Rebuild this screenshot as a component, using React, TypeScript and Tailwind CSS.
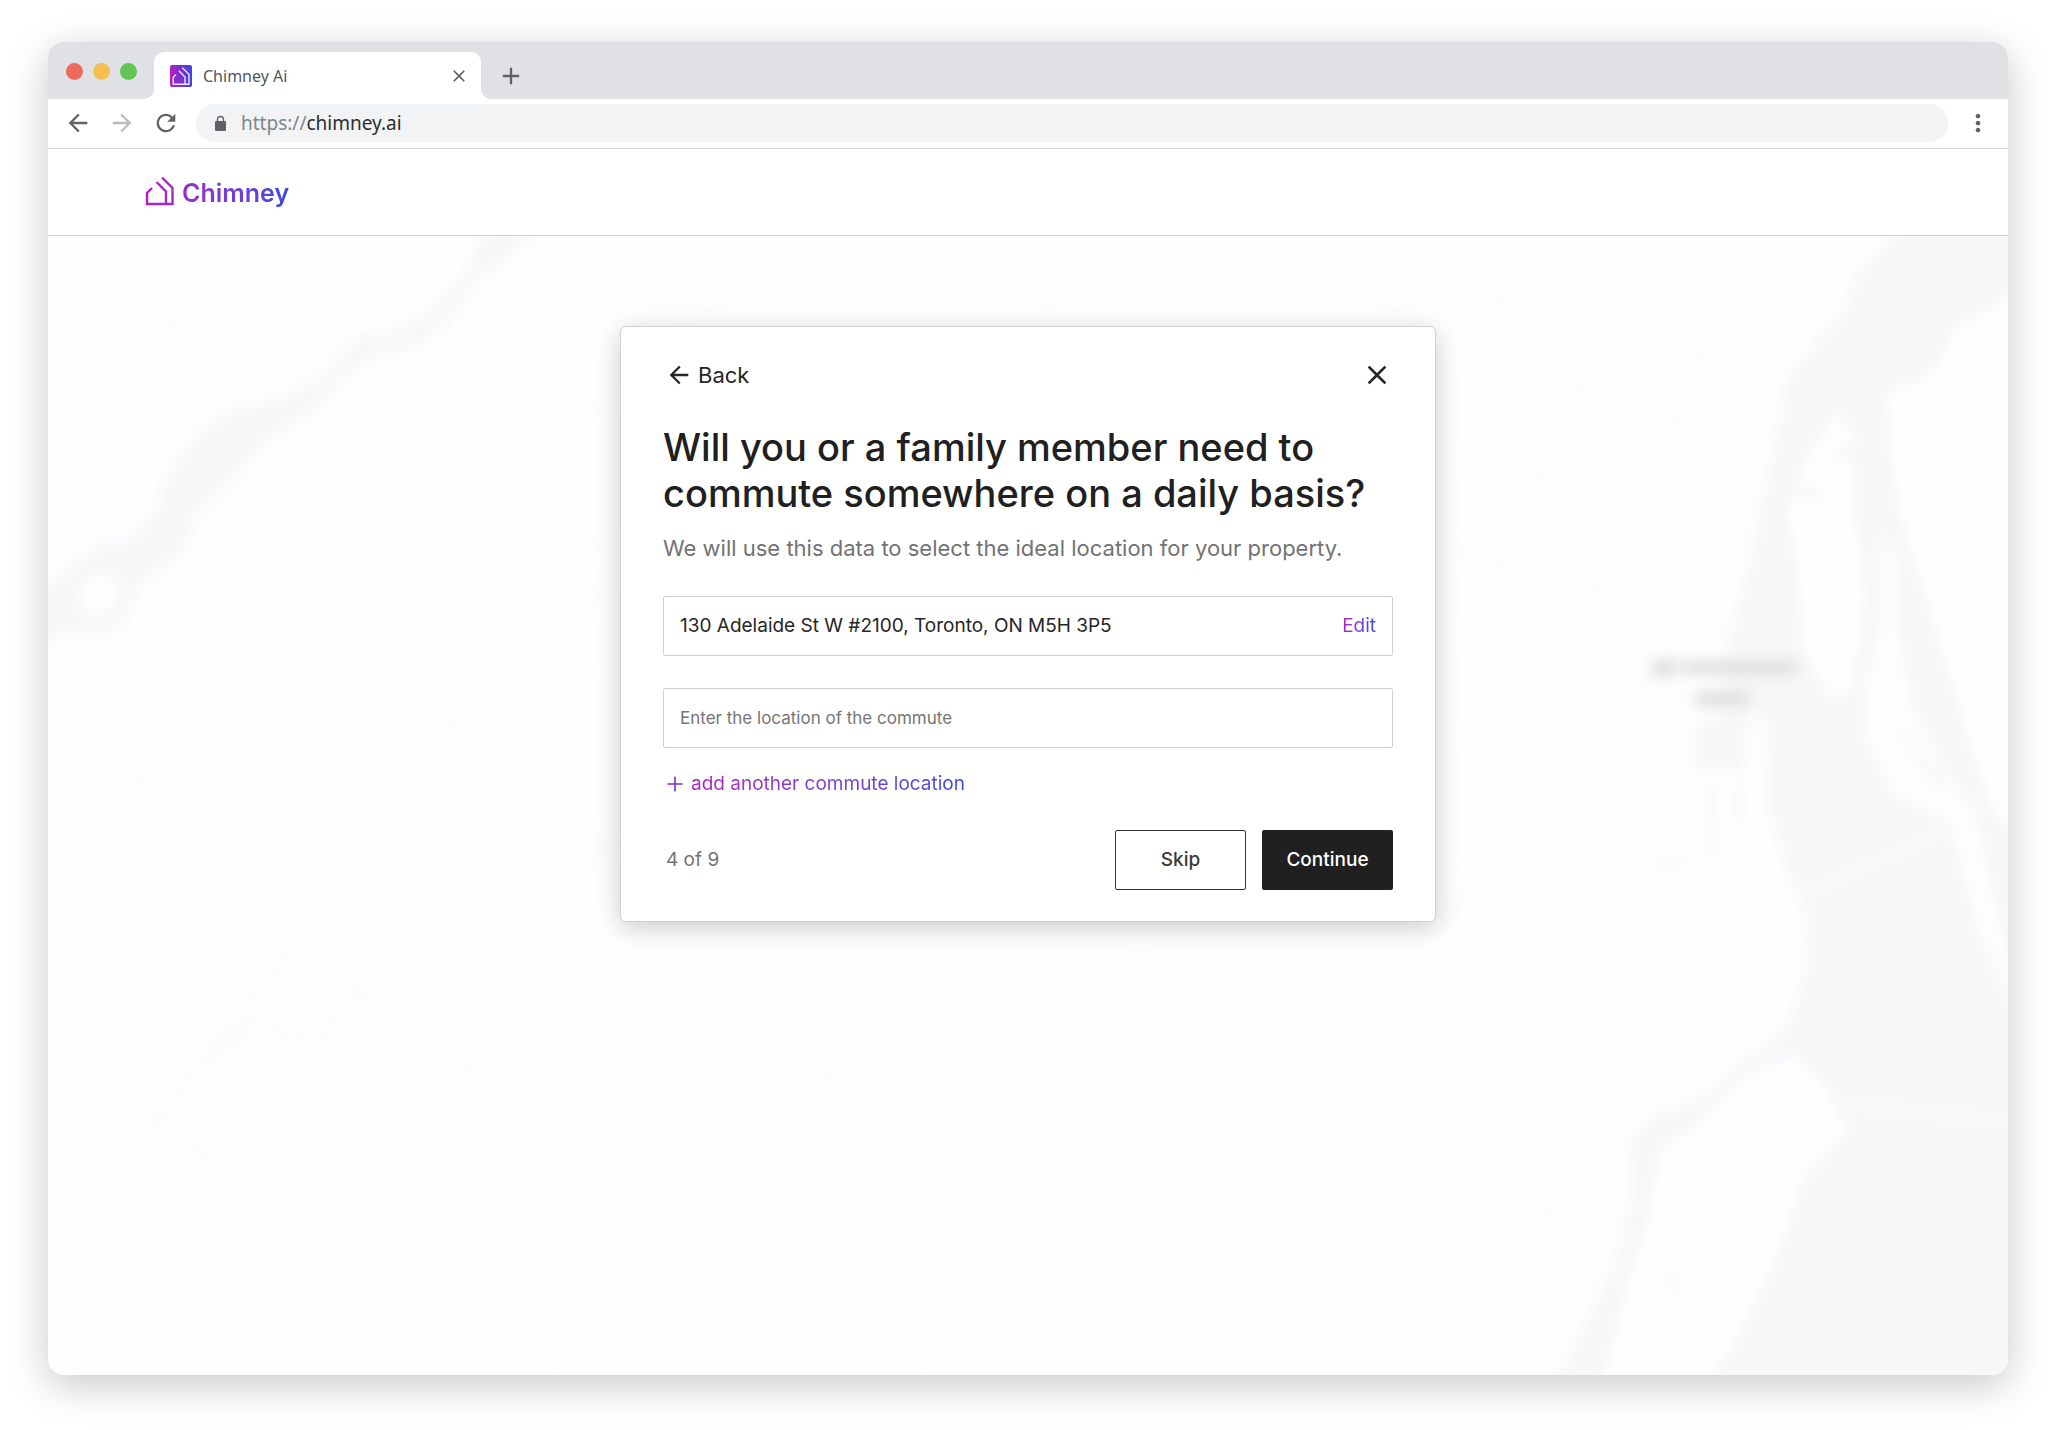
import type { ReactNode } from "react";
import {
  MdAdd,
  MdArrowBack,
  MdArrowForward,
  MdClose,
  MdMoreVert,
  MdRefresh,
} from "react-icons/md";

const HOUSE = "M7 12 L2 17 V28 H27.5 V12 L17 1.5 M11.5 6 L21 15.5 V28";

function HouseMark() {
  return (
    <svg viewBox="0 0 30 30" className="size-[30px]" fill="none" aria-hidden="true">
      <defs>
        <linearGradient id="mark" x1="0" y1="0" x2="30" y2="0" gradientUnits="userSpaceOnUse">
          <stop offset="0" stopColor="#b31ec4" />
          <stop offset="1" stopColor="#9a2ecb" />
        </linearGradient>
      </defs>
      <path d={HOUSE} stroke="url(#mark)" strokeWidth="2.4" />
    </svg>
  );
}

function Favicon() {
  return (
    <svg viewBox="0 0 22 22" className="size-[22px]" fill="none" aria-hidden="true">
      <defs>
        <linearGradient id="fav" x1="0" y1="0" x2="22" y2="0" gradientUnits="userSpaceOnUse">
          <stop offset="0" stopColor="#b31ec4" />
          <stop offset="1" stopColor="#3a46e2" />
        </linearGradient>
      </defs>
      <rect width="22" height="22" rx="2" fill="url(#fav)" />
      <path
        d="M6 9.5 L3.2 12.2 V19.3 H19 V9.3 L12.4 2.7 M8.8 5.8 L15 12 V19.3"
        stroke="#f3e6fb"
        strokeWidth="1.4"
      />
    </svg>
  );
}

function LockIcon() {
  return (
    <svg viewBox="0 0 17 17" className="size-[17px]" fill="none" aria-hidden="true">
      <rect x="3" y="6" width="11" height="10" rx="1.2" fill="#5f6368" />
      <path d="M5.5 6.5 V4.5 a3 3 0 0 1 6 0 V6.5" stroke="#5f6368" strokeWidth="1.4" />
    </svg>
  );
}

function TabCorner({ side }: { side: "left" | "right" }) {
  return (
    <svg
      viewBox="0 0 10 10"
      aria-hidden="true"
      className={
        side === "left"
          ? "absolute bottom-0 -left-[10px] size-[10px]"
          : "absolute bottom-0 -right-[10px] size-[10px] -scale-x-100"
      }
    >
      <path d="M10 0 V10 H0 A10 10 0 0 0 10 0 Z" fill="#fff" />
    </svg>
  );
}

const ROADS = [
  "M36 526 L106 596 L169 654 L217 701 L271 750 L332 788 L377 835 L431 881",
  "M160 549 L262 631 Q285 650 302 642 L371 572 L440 510",
  "M36 674 L121 666 L211 671 L302 683 L377 671 L480 650",
  "M36 690 L106 596 L211 488 L270 480",
  "M187 391 L281 467 L335 543 L395 596 L416 636 L470 640",
  "M72 199 L121 240 L180 290 M151 193 L226 286 L300 330",
  "M169 951 Q180 975 193 975 L302 881 L350 823 L446 718",
  "M169 951 L235 881 M36 843 L106 771 M36 759 Q50 780 60 773 L118 730",
  "M422 1048 L419 934 Q440 935 446 928 L464 846 L500 800",
  "M36 1016 L211 1021 L473 1021",
  "M36 270 L150 240 L260 190 M36 340 L120 290",
  "M187 425 L260 400 L360 370 L470 300 M281 467 L380 440 L470 410",
  "M262 631 L380 520 L480 430 M302 683 L420 600",
  "M585 880 Q600 830 640 808 L745 862 L690 965 Q630 940 585 900",
  "M750 790 L870 730 L960 760 L900 860 L790 960 L700 1048",
  "M560 750 L640 808 L560 940 L480 1020",
  "M830 1020 L940 930 L1068 868 L1157 788 L1243 700 L1290 660",
  "M860 1040 L980 940 L1100 880 L1190 800 L1280 740",
  "M1119 485 L1227 502 L1300 540 M1119 560 L1250 600",
  "M1100 700 L1200 590 L1290 480 L1340 380",
  "M1119 270 L1220 300 L1350 340 M1100 215 L1200 245 L1370 290",
  "M1119 350 L1240 380 L1330 400 M1110 420 L1220 450 L1310 480",
  "M1150 190 L1130 300 M1250 200 L1190 330 L1140 440 M1330 200 L1260 360 L1200 480",
  "M1068 760 L1130 830 L1120 960 L1060 1048 M1130 830 L1240 870",
  "M1140 920 L1240 930 M1130 980 L1220 975 M1180 830 L1180 960",
  "M420 190 L520 240 L640 200 L800 230 L960 190 L1080 240",
];

function MapBackdrop() {
  return (
    <svg
      viewBox="37 180 1494 868"
      preserveAspectRatio="xMidYMid slice"
      className="absolute inset-0 size-full"
      aria-hidden="true"
    >
      <defs>
        <filter id="soft" x="-5%" y="-5%" width="110%" height="110%" colorInterpolationFilters="sRGB">
          <feGaussianBlur stdDeviation="5" />
        </filter>
        <filter id="softer" x="-20%" y="-60%" width="140%" height="220%" colorInterpolationFilters="sRGB">
          <feGaussianBlur stdDeviation="5" />
        </filter>
      </defs>
      <rect x="0" y="140" width="1600" height="960" fill="#fefefe" />
      <g filter="url(#soft)" strokeLinejoin="round" strokeLinecap="round">
        <g fill="none" stroke="#fbfbfb" strokeWidth="7">
          {ROADS.map((d) => (
            <path key={d} d={d} />
          ))}
        </g>
        <path
          fill="none"
          stroke="#f8fafd"
          strokeWidth="7"
          d="M115 857 L154 811 L223 724 M118 855 L157 884 M154 811 L196 782 L241 794 L277 753"
        />
        <path
          fill="#f5f7f9"
          d="M378 150 L356 205 L332 234 L302 252 L271 258 L241 290 L211 304 L181 310 L151 329 L124 366 L121 385 L100 410 L81 413 L60 426 L20 462 L20 497 L60 480 L81 484 L97 475 L106 449 L142 420 L151 393 L181 365 L205 335 L235 319 L256 294 L287 272 L320 265 L347 242 L362 218 L407 181 L440 150 Z"
        />
        <path fill="#fefefe" d="M58 455 L75 436 L91 444 L88 464 L69 470 Z" />
        <path
          fill="#f5f7f9"
          d="M1450 140 L1440 180 L1415 210 L1403 240 L1364 283 L1352 339 L1339 403 L1326 455 L1316 492 L1312 545 L1290 554 L1290 586 L1330 590 L1336 540 L1345 549 L1348 619 L1364 671 L1377 700 L1374 747 L1361 785 L1339 800 L1317 819 L1297 837 L1259 850 L1243 870 L1243 916 L1230 963 L1208 1010 L1180 1060 L1600 1090 L1600 140 Z"
        />
        <g fill="#fefefe">
          <path d="M1368 806 L1387 823 L1409 861 L1374 899 L1355 957 L1323 1022 L1296 1062 L1220 1062 L1243 975 L1259 922 L1266 876 L1297 857 L1339 815 Z" />
          <path d="M1403 315 L1412 333 L1412 380 L1422 455 L1412 525 L1400 534 L1384 514 L1374 490 L1371 432 L1363 391 L1380 345 Z" />
          <path d="M1600 205 L1531 228 L1492 251 L1473 286 L1438 301 L1447 385 L1476 479 L1508 584 L1521 619 L1600 700 Z" />
          <path
            fillOpacity="0.85"
            d="M1435 403 L1447 426 L1447 479 L1457 537 L1483 590 L1505 619 L1545 790 L1510 715 L1486 625 L1444 607 L1422 560 L1422 525 L1435 467 Z"
          />
        </g>
        <g fill="none" stroke="#f4f6f9" strokeWidth="9">
          <path d="M1374 375 L1388 377 M1400 345 L1408 348 M1272 972 L1278 980" />
          <path d="M1304 600 L1304 650 M1326 600 L1326 625" strokeOpacity="0.6" />
          <path d="M1452 560 L1478 600" strokeOpacity="0.6" />
          <path d="M1265 660 L1280 656" strokeOpacity="0.6" />
        </g>
        <g fill="none" stroke="#fafbfc" strokeWidth="4">
          <path d="M1371 683 L1489 631" />
          <path d="M1412 842 L1560 858" strokeWidth="6" />
        </g>
      </g>
      <g filter="url(#softer)" fill="#dededf">
        <rect x="1260" y="503" width="18" height="12" />
        <rect x="1282" y="504" width="88" height="10" />
        <rect x="1293" y="527" width="40" height="11" />
      </g>
    </svg>
  );
}

function ToolButton({ label, children }: { label: string; children: ReactNode }) {
  return (
    <button type="button" aria-label={label} className="size-7 shrink-0 text-[28px]">
      {children}
    </button>
  );
}

function BrowserChrome() {
  return (
    <header className="font-['Noto_Sans',sans-serif]">
      <div className="flex h-[57px] items-end bg-[#dfe1e5] pl-[18px]">
        <div className="flex items-center gap-[10px] self-center pt-[2px]">
          <span className="size-[17px] rounded-full bg-[#ec6a5e]" />
          <span className="size-[17px] rounded-full bg-[#f4bf4f]" />
          <span className="size-[17px] rounded-full bg-[#61c554]" />
        </div>
        <div className="relative ml-[17px] flex h-[47px] w-[327px] items-center gap-[11px] rounded-t-[10px] bg-white pr-3 pl-4">
          <TabCorner side="left" />
          <Favicon />
          <span className="flex-1 text-base text-[#54575b]">Chimney Ai</span>
          <button type="button" aria-label="Close tab" className="text-xl text-[#5f6368]">
            <MdClose />
          </button>
          <TabCorner side="right" />
        </div>
        <button
          type="button"
          aria-label="New tab"
          className="ml-4 flex h-[47px] items-center text-[28px] text-[#5f6368]"
        >
          <MdAdd />
        </button>
      </div>
      <div className="flex h-[50px] items-center gap-4 border-b border-[#d5d7da] bg-white px-4 pb-px text-[#5f6368]">
        <ToolButton label="Go back">
          <MdArrowBack />
        </ToolButton>
        <span className="flex text-[#babcbe]">
          <ToolButton label="Go forward">
            <MdArrowForward />
          </ToolButton>
        </span>
        <ToolButton label="Reload">
          <MdRefresh />
        </ToolButton>
        <div className="flex h-[38px] flex-1 items-center gap-3 rounded-full bg-[#f1f3f4] px-4">
          <LockIcon />
          <p className="text-[19px] leading-7 text-[#2c2e31]">
            <span className="text-[#80868b]">https://</span>chimney.ai
          </p>
        </div>
        <ToolButton label="Menu">
          <MdMoreVert />
        </ToolButton>
      </div>
    </header>
  );
}

function CommuteCard() {
  return (
    <form
      className="relative w-full max-w-[816px] rounded-md border border-[#d0d1d6] bg-white px-[42px] pt-[34px] pb-[31px] text-[19px] leading-7 text-[#262626] shadow-[0_6px_26px_rgba(0,0,0,0.2)]"
      onSubmit={(e) => e.preventDefault()}
    >
      <div className="flex items-center justify-between">
        <button type="button" className="flex items-center gap-[5px] pl-[2px] text-[22px] leading-7">
          <MdArrowBack className="text-[28px]" aria-hidden="true" />
          Back
        </button>
        <button type="button" aria-label="Close" className="flex h-7 items-center text-[32px]">
          <MdClose />
        </button>
      </div>

      <h1 className="mt-[35px] text-[38px] leading-[46px] font-medium text-[#202020]">
        Will you or a family member need to commute somewhere on a daily basis?
      </h1>
      <p className="mt-[18px] text-[22px] leading-7 text-[#737373]">
        We will use this data to select the ideal location for your property.
      </p>

      <div className="mt-[34px] flex h-[60px] items-center rounded-[2px] border border-[#d0d1d6] px-4">
        <input
          aria-label="Commute location 1"
          defaultValue="130 Adelaide St W #2100, Toronto, ON M5H 3P5"
          className="min-w-0 flex-1 bg-transparent outline-none"
        />
        <button
          type="button"
          className="bg-gradient-to-r from-[#b31ec4] to-[#3a46e2] bg-clip-text text-transparent"
        >
          Edit
        </button>
      </div>
      <input
        aria-label="Commute location 2"
        placeholder="Enter the location of the commute"
        className="mt-8 h-[60px] w-full rounded-[2px] border border-[#d0d1d6] px-4 text-[17px] outline-none placeholder:text-[#757575]"
      />

      <button type="button" className="mt-[22px] flex items-center gap-2 pl-1">
        <svg viewBox="0 0 16 16" className="size-4" fill="none" aria-hidden="true">
          <defs>
            <linearGradient id="plus" x1="0" y1="0" x2="16" y2="0" gradientUnits="userSpaceOnUse">
              <stop offset="0" stopColor="#b31ec4" />
              <stop offset="1" stopColor="#3a46e2" />
            </linearGradient>
          </defs>
          <path
            d="M7.2 0.5 H8.8 V7.2 H15.5 V8.8 H8.8 V15.5 H7.2 V8.8 H0.5 V7.2 H7.2 Z"
            fill="url(#plus)"
          />
        </svg>
        <span className="bg-gradient-to-r from-[#b31ec4] to-[#3a46e2] bg-clip-text text-transparent">
          add another commute location
        </span>
      </button>

      <div className="mt-8 flex items-center gap-4">
        <p className="flex-1 pl-[3px] text-[#737373]">4 of 9</p>
        <button
          type="button"
          className="h-[60px] w-[131px] rounded-[2px] border border-[#333333] bg-white font-medium text-[#3a3a3a]"
        >
          Skip
        </button>
        <button
          type="submit"
          className="h-[60px] w-[131px] rounded-[2px] bg-[#202020] font-medium text-white"
        >
          Continue
        </button>
      </div>
    </form>
  );
}

export default function App() {
  return (
    <div className="flex min-h-screen flex-col bg-white px-12 pt-[42px] pb-[55px] font-['Inter',sans-serif]">
      <div className="flex flex-1 flex-col overflow-hidden rounded-2xl shadow-[0_10px_40px_rgba(0,0,0,0.22)]">
        <BrowserChrome />
        <div className="flex h-[87px] items-center border-b border-[#d0d1d4] bg-white px-[97px]">
          <a href="#home" className="flex items-start gap-[7px] pt-px">
            <HouseMark />
            <span className="bg-gradient-to-r from-[#9a2ecb] to-[#3a46e2] bg-clip-text text-[25px] leading-[34px] font-semibold text-transparent">
              Chimney
            </span>
          </a>
        </div>
        <main className="relative flex flex-1 items-start justify-center px-6 py-[90px]">
          <MapBackdrop />
          <CommuteCard />
        </main>
      </div>
    </div>
  );
}
